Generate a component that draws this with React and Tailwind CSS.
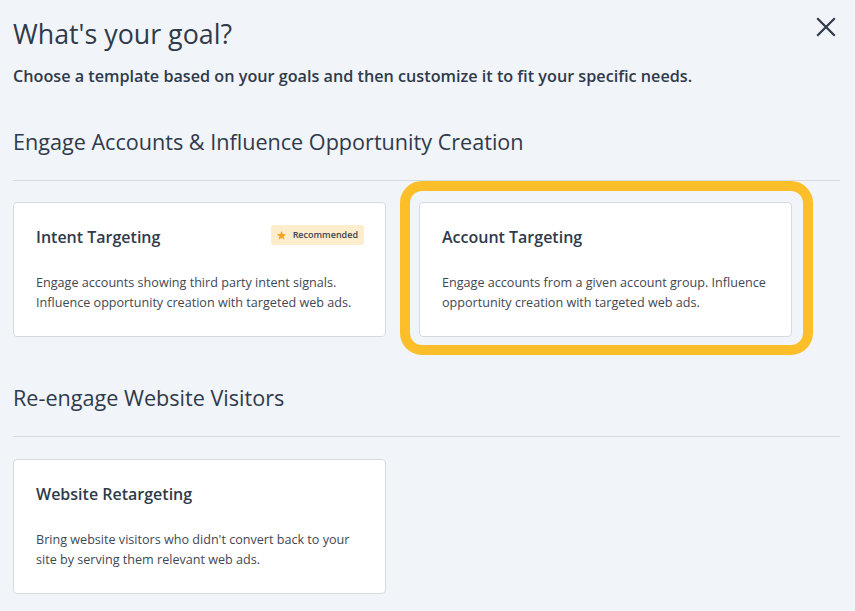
import React from "react";

function Card({ title, desc, badge, highlight }) {
  return (
    <div className="relative w-[373px] h-[135px]">
      {highlight && (
        <div className="absolute -left-[19px] -right-[21px] -top-[21px] -bottom-[18px] border-[10px] border-[#fcbf2a] rounded-[22px] pointer-events-none" />
      )}
      <div className="w-full h-full bg-white border border-[#d6dbe1] rounded-[4px] px-[22px] pt-[22px]">
        <div className="flex items-start justify-between">
          <div className="text-[16px] font-semibold text-[#2f3a4b] leading-[24px]">{title}</div>
          {badge && (
            <div className="mt-[0px] mr-[-1px] flex items-center gap-[6px] bg-[#fdedcc] rounded-[2px] pl-[5px] pr-[6px] h-[20px] text-[9px] font-semibold text-[#3d4452]">
              <svg width="11" height="11" viewBox="0 0 24 24"><path fill="#f6a224" d="M12 2l2.9 6.6 7.1.6-5.4 4.7 1.6 7-6.2-3.7-6.2 3.7 1.6-7L2 9.2l7.1-.6z"/></svg>
              Recommended
            </div>
          )}
        </div>
        <p className="mt-[24px] text-[12.6px] leading-[20px] text-[#3f4754]">{desc}</p>
      </div>
    </div>
  );
}

export default function App() {
  return (
    <div className="w-[855px] h-[611px] overflow-hidden bg-[#f1f4f8] pl-[13px] pr-[15px] pt-[15px] text-[#2f3a4b]" style={{ fontFamily: '"Open Sans", sans-serif' }}>
      <div className="flex items-start justify-between">
        <h1 className="text-[26.8px] leading-[38px] font-normal">What's your goal?</h1>
        <button className="mt-[1px] mr-[3px] w-[22px] h-[22px] flex items-center justify-center text-[#2f3a4b]">
          <svg width="20" height="20" viewBox="0 0 20 20" fill="none" stroke="currentColor" strokeWidth="2.2" strokeLinecap="square"><path d="M2 2L18 18M18 2L2 18"/></svg>
        </button>
      </div>
      <p className="mt-[13px] text-[16.2px] font-semibold leading-[20px] text-[#2f3a4b]">Choose a template based on your goals and then customize it to fit your specific needs.</p>
      <h2 className="mt-[41px] text-[21.6px] leading-[30px] font-normal">Engage Accounts &amp; Influence Opportunity Creation</h2>
      <div className="mt-[23px] h-px bg-[#d6dbe1]" />
      <div className="mt-[21px] flex gap-[33px]">
        <Card title="Intent Targeting" badge desc={<>Engage accounts showing third party intent signals.<br />Influence opportunity creation with targeted web ads.</>} />
        <Card title="Account Targeting" highlight desc={<>Engage accounts from a given account group. Influence<br />opportunity creation with targeted web ads.</>} />
      </div>
      <h2 className="mt-[46px] text-[21.6px] leading-[30px] font-normal">Re-engage Website Visitors</h2>
      <div className="mt-[23px] h-px bg-[#d6dbe1]" />
      <div className="mt-[22px] flex">
        <Card title="Website Retargeting" desc={<>Bring website visitors who didn't convert back to your<br />site by serving them relevant web ads.</>} />
      </div>
    </div>
  );
}
